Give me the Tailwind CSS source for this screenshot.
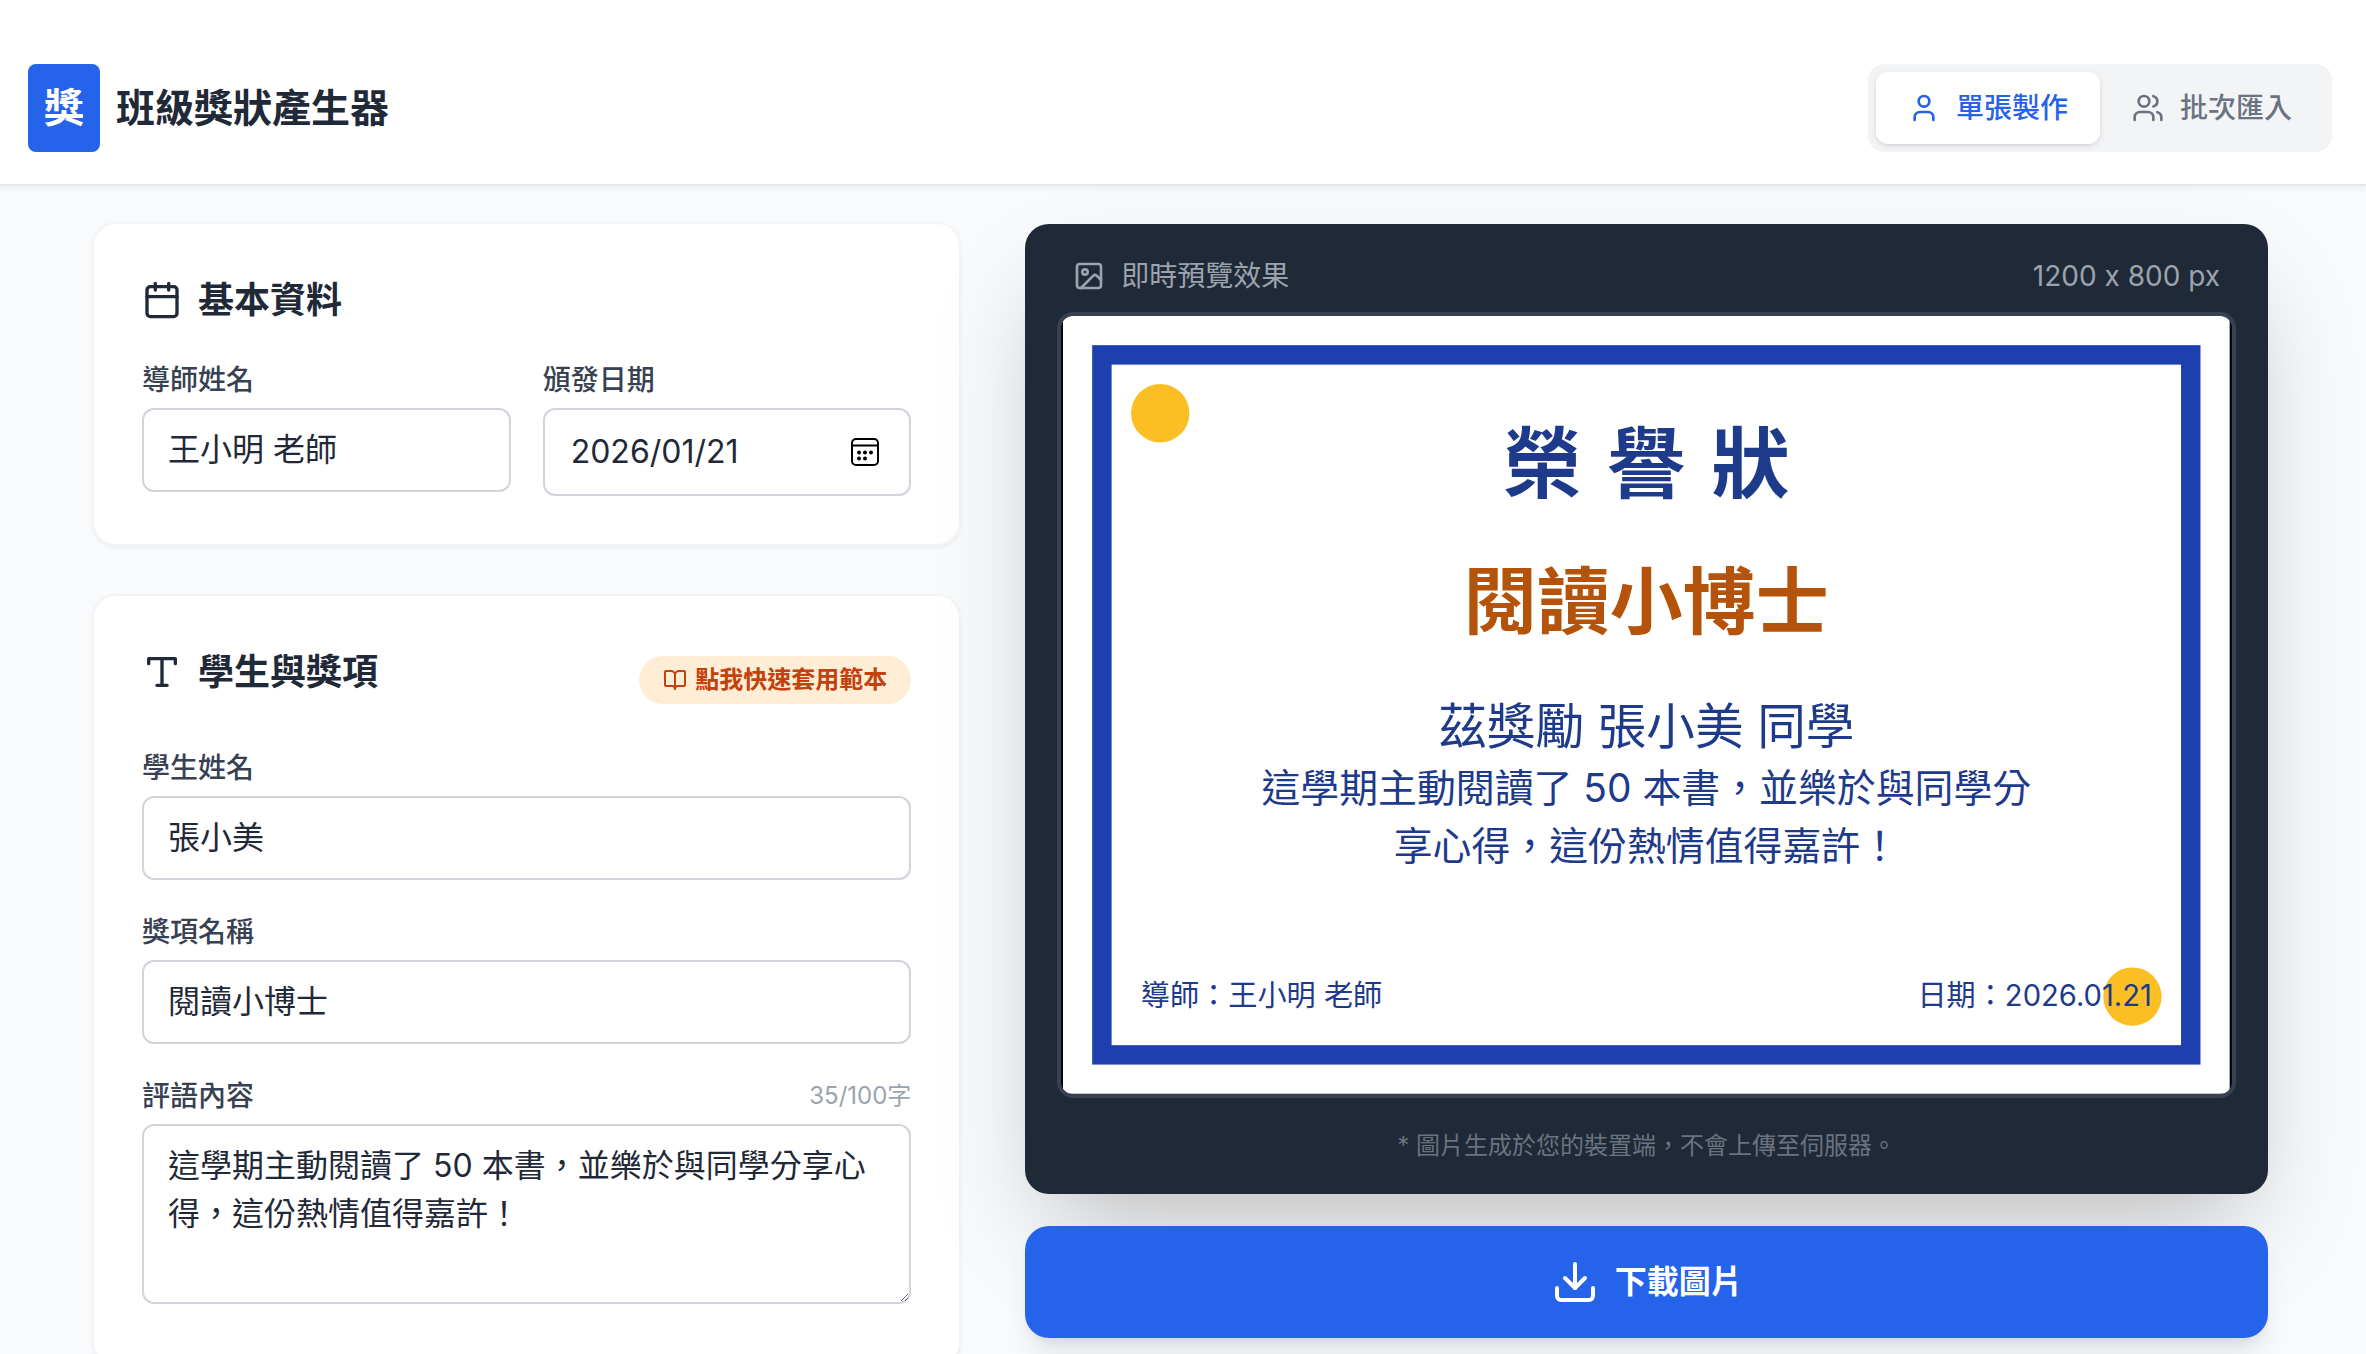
<!DOCTYPE html>
<html lang="zh-Hant">
<head>
    <meta charset="UTF-8">
    <meta name="viewport" content="width=device-width, initial-scale=1.0">
    <title>班級獎狀產生器</title>
    <script src="https://cdn.jsdelivr.net/npm/@tailwindcss/browser@4"></script>
</head>
<body class="flex flex-col h-screen bg-[#f9fafb] text-[#1f2937] font-['Inter','Noto_Sans_CJK_TC',sans-serif] [font-variant-ligatures:none]">
    <header class="relative z-10 shrink-0 flex items-center justify-between bg-white border-b-2 border-[#e5e7eb] pt-16 pb-8 pl-7 pr-[34px] shadow-[0_2px_6px_rgb(0_0_0/0.06)]">
        <div class="flex items-center gap-4">
            <span class="bg-[#2563eb] text-white font-bold text-[40px] leading-[56px] p-4 rounded-lg">獎</span>
            <h1 class="font-bold text-[39px] leading-[56px]">班級獎狀產生器</h1>
        </div>
        <nav class="flex bg-[#f3f4f6] p-2 rounded-2xl text-[28px] leading-[40px] font-medium">
            <button type="button" class="flex items-center gap-4 px-8 py-4 rounded-xl bg-white text-[#2563eb] shadow-[0_2px_6px_rgb(0_0_0/0.1),0_2px_4px_-2px_rgb(0_0_0/0.1)]">
                <svg class="size-8" viewBox="0 0 24 24" fill="none" stroke="currentColor" stroke-width="2" stroke-linecap="round" stroke-linejoin="round"><path d="M19 21v-2a4 4 0 0 0-4-4H9a4 4 0 0 0-4 4v2"/><circle cx="12" cy="7" r="4"/></svg>
                單張製作
            </button>
            <button type="button" class="flex items-center gap-4 px-8 py-4 rounded-xl text-[#6b7280]">
                <svg class="size-8" viewBox="0 0 24 24" fill="none" stroke="currentColor" stroke-width="2" stroke-linecap="round" stroke-linejoin="round"><path d="M16 21v-2a4 4 0 0 0-4-4H6a4 4 0 0 0-4 4v2"/><circle cx="9" cy="7" r="4"/><path d="M22 21v-2a4 4 0 0 0-3-3.87"/><path d="M16 3.13a4 4 0 0 1 0 7.75"/></svg>
                批次匯入
            </button>
        </nav>
    </header>

    <main class="grid grid-cols-12 gap-16 items-start flex-1 min-h-0 overflow-y-auto [scrollbar-width:none] pt-9 pb-16 pl-[92px] pr-[98px]">
        <div class="col-span-5 flex flex-col gap-12">
            <!-- 基本資料 -->
            <section class="bg-white border-2 border-[#f3f4f6] rounded-3xl p-12 shadow-[0_2px_4px_rgb(0_0_0/0.05)]">
                <h2 class="flex items-center gap-4 mb-8 font-bold text-[36px] leading-[56px]">
                    <svg class="size-10" viewBox="0 0 24 24" fill="none" stroke="currentColor" stroke-width="2" stroke-linecap="round" stroke-linejoin="round"><path d="M8 2v4"/><path d="M16 2v4"/><rect width="18" height="18" x="3" y="4" rx="2"/><path d="M3 10h18"/></svg>
                    基本資料
                </h2>
                <div class="grid grid-cols-2 gap-8 items-start">
                    <div>
                        <label for="teacher" class="block mb-2 font-medium text-[28px] leading-[40px] text-[#374151]">導師姓名</label>
                        <input type="text" id="teacher" name="teacher" value="王小明 老師" class="block w-full px-6 py-4 border-2 border-[#d1d5db] rounded-xl text-[32px] leading-[48px]">
                    </div>
                    <div>
                        <label for="date" class="block mb-2 font-medium text-[28px] leading-[40px] text-[#374151]">頒發日期</label>
                        <div class="flex items-center pl-6 pr-7 border-2 border-[#d1d5db] rounded-xl">
                            <input type="text" id="date" name="date" value="2026/01/21" class="min-w-0 flex-1 py-[18px] px-[2px] text-[32px] leading-[48px] outline-none">
                            <button type="button" aria-label="選擇日期" class="text-black">
                                <svg class="size-8" viewBox="0 0 32 32" fill="none" stroke="currentColor" stroke-width="2"><rect x="3" y="3" width="26" height="26" rx="4"/><path d="M3 9.500h26"/><g fill="currentColor" stroke="none"><circle cx="10" cy="16.500" r="2"/><circle cx="16" cy="16.500" r="2"/><circle cx="22" cy="16.500" r="2"/><circle cx="10" cy="22.500" r="2"/><circle cx="16" cy="22.500" r="2"/></g></svg>
                            </button>
                        </div>
                    </div>
                </div>
            </section>

            <!-- 學生與獎項 -->
            <section class="bg-white border-2 border-[#f3f4f6] rounded-3xl p-12 pb-15 shadow-[0_2px_4px_rgb(0_0_0/0.05)]">
                <div class="flex items-center justify-between mb-8">
                    <h2 class="flex items-center gap-4 mb-4 font-bold text-[36px] leading-[56px]">
                        <svg class="size-10" viewBox="0 0 24 24" fill="none" stroke="currentColor" stroke-width="2" stroke-linecap="round" stroke-linejoin="round"><path d="M4 7V4h16v3"/><path d="M9 20h6"/><path d="M12 4v16"/></svg>
                        學生與獎項
                    </h2>
                    <button type="button" class="flex items-center gap-2 px-6 py-2 rounded-full bg-[#ffedd5] text-[#c2410c] font-bold text-[24px] leading-[32px]">
                        <svg class="size-6" viewBox="0 0 24 24" fill="none" stroke="currentColor" stroke-width="2" stroke-linecap="round" stroke-linejoin="round"><path d="M12 7v14"/><path d="M3 18a1 1 0 0 1-1-1V4a1 1 0 0 1 1-1h5a4 4 0 0 1 4 4 4 4 0 0 1 4-4h5a1 1 0 0 1 1 1v13a1 1 0 0 1-1 1h-6a3 3 0 0 0-3 3 3 3 0 0 0-3-3z"/></svg>
                        點我快速套用範本
                    </button>
                </div>
                <div class="flex flex-col gap-8">
                    <div>
                        <label for="student" class="block mb-2 font-medium text-[28px] leading-[40px] text-[#374151]">學生姓名</label>
                        <input type="text" id="student" name="student" value="張小美" class="block w-full px-6 py-4 border-2 border-[#d1d5db] rounded-xl text-[32px] leading-[48px]">
                    </div>
                    <div>
                        <label for="award" class="block mb-2 font-medium text-[28px] leading-[40px] text-[#374151]">獎項名稱</label>
                        <input type="text" id="award" name="award" value="閱讀小博士" class="block w-full px-6 py-4 border-2 border-[#d1d5db] rounded-xl text-[32px] leading-[48px]">
                    </div>
                    <div>
                        <div class="flex items-center justify-between mb-2">
                            <label for="comment" class="font-medium text-[28px] leading-[40px] text-[#374151]">評語內容</label>
                            <span class="text-[24px] leading-[32px] text-[#9ca3af]">35/100字</span>
                        </div>
                        <textarea id="comment" name="comment" rows="3" class="block w-full px-6 py-4 border-2 border-[#d1d5db] rounded-xl text-[32px] leading-[48px] resize-y">這學期主動閱讀了 50 本書，並樂於與同學分享心得，這份熱情值得嘉許！</textarea>
                    </div>
                </div>
            </section>
        </div>

        <div class="col-span-7 flex flex-col gap-8 pt-[2px]">
            <!-- 即時預覽 -->
            <section class="bg-[#1f2937] rounded-3xl p-8 shadow-[0_50px_100px_-24px_rgb(0_0_0/0.25)]">
                <div class="flex items-center justify-between px-4 mb-4 text-[28px] leading-[40px] text-[#9ca3af]">
                    <h3 class="flex items-center gap-4">
                        <svg class="size-8" viewBox="0 0 24 24" fill="none" stroke="currentColor" stroke-width="2" stroke-linecap="round" stroke-linejoin="round"><rect width="18" height="18" x="3" y="3" rx="2"/><circle cx="9" cy="9" r="2"/><path d="m21 15-3.086-3.086a2 2 0 0 0-2.828 0L6 21"/></svg>
                        即時預覽效果
                    </h3>
                    <span>1200 x 800 px</span>
                </div>
                <div class="aspect-[3/2] bg-[#030712] border-4 border-[#374151] rounded-2xl overflow-hidden">
                    <svg class="block size-full" viewBox="0 0 1200 800" text-anchor="middle" fill="#1e3a8a">
                        <rect width="1200" height="800" fill="#ffffff"/>
                        <rect x="40" y="40" width="1120" height="720" fill="none" stroke="#1e40af" stroke-width="20"/>
                        <circle cx="100" cy="100" r="30" fill="#fbbf24"/>
                        <circle cx="1100" cy="700" r="30" fill="#fbbf24"/>
                        <text y="181" font-size="80" font-weight="700" text-anchor="start"><tspan x="453">榮 </tspan><tspan x="560">譽 </tspan><tspan x="667">狀</tspan></text>
                        <text x="600" y="321" font-size="75" font-weight="700" fill="#b45309">閱讀小博士</text>
                        <text x="600" y="440" font-size="50">茲獎勵 張小美 同學</text>
                        <text x="600" y="500" font-size="40">這學期主動閱讀了 50 本書，並樂於與同學分</text>
                        <text x="600" y="560" font-size="40">享心得，這份熱情值得嘉許！</text>
                        <text x="80" y="710" font-size="30" text-anchor="start">導師：王小明 老師</text>
                        <text x="1120" y="710" font-size="30" text-anchor="end">日期：2026.01.21</text>
                    </svg>
                </div>
                <p class="mt-8 text-center text-[24px] leading-[32px] text-[#6b7280]">* 圖片生成於您的裝置端，不會上傳至伺服器。</p>
            </section>
            <button type="button" class="flex items-center justify-center gap-4 py-8 rounded-3xl bg-[#2563eb] text-white font-bold text-[32px] leading-[48px] shadow-[0_20px_30px_-6px_rgb(0_0_0/0.1),0_8px_12px_-8px_rgb(0_0_0/0.1)]">
                <svg class="size-12" viewBox="0 0 24 24" fill="none" stroke="currentColor" stroke-width="2" stroke-linecap="round" stroke-linejoin="round"><path d="M21 15v4a2 2 0 0 1-2 2H5a2 2 0 0 1-2-2v-4"/><path d="m7 10 5 5 5-5"/><path d="M12 15V3"/></svg>
                下載圖片
            </button>
        </div>
    </main>
</body>
</html>
